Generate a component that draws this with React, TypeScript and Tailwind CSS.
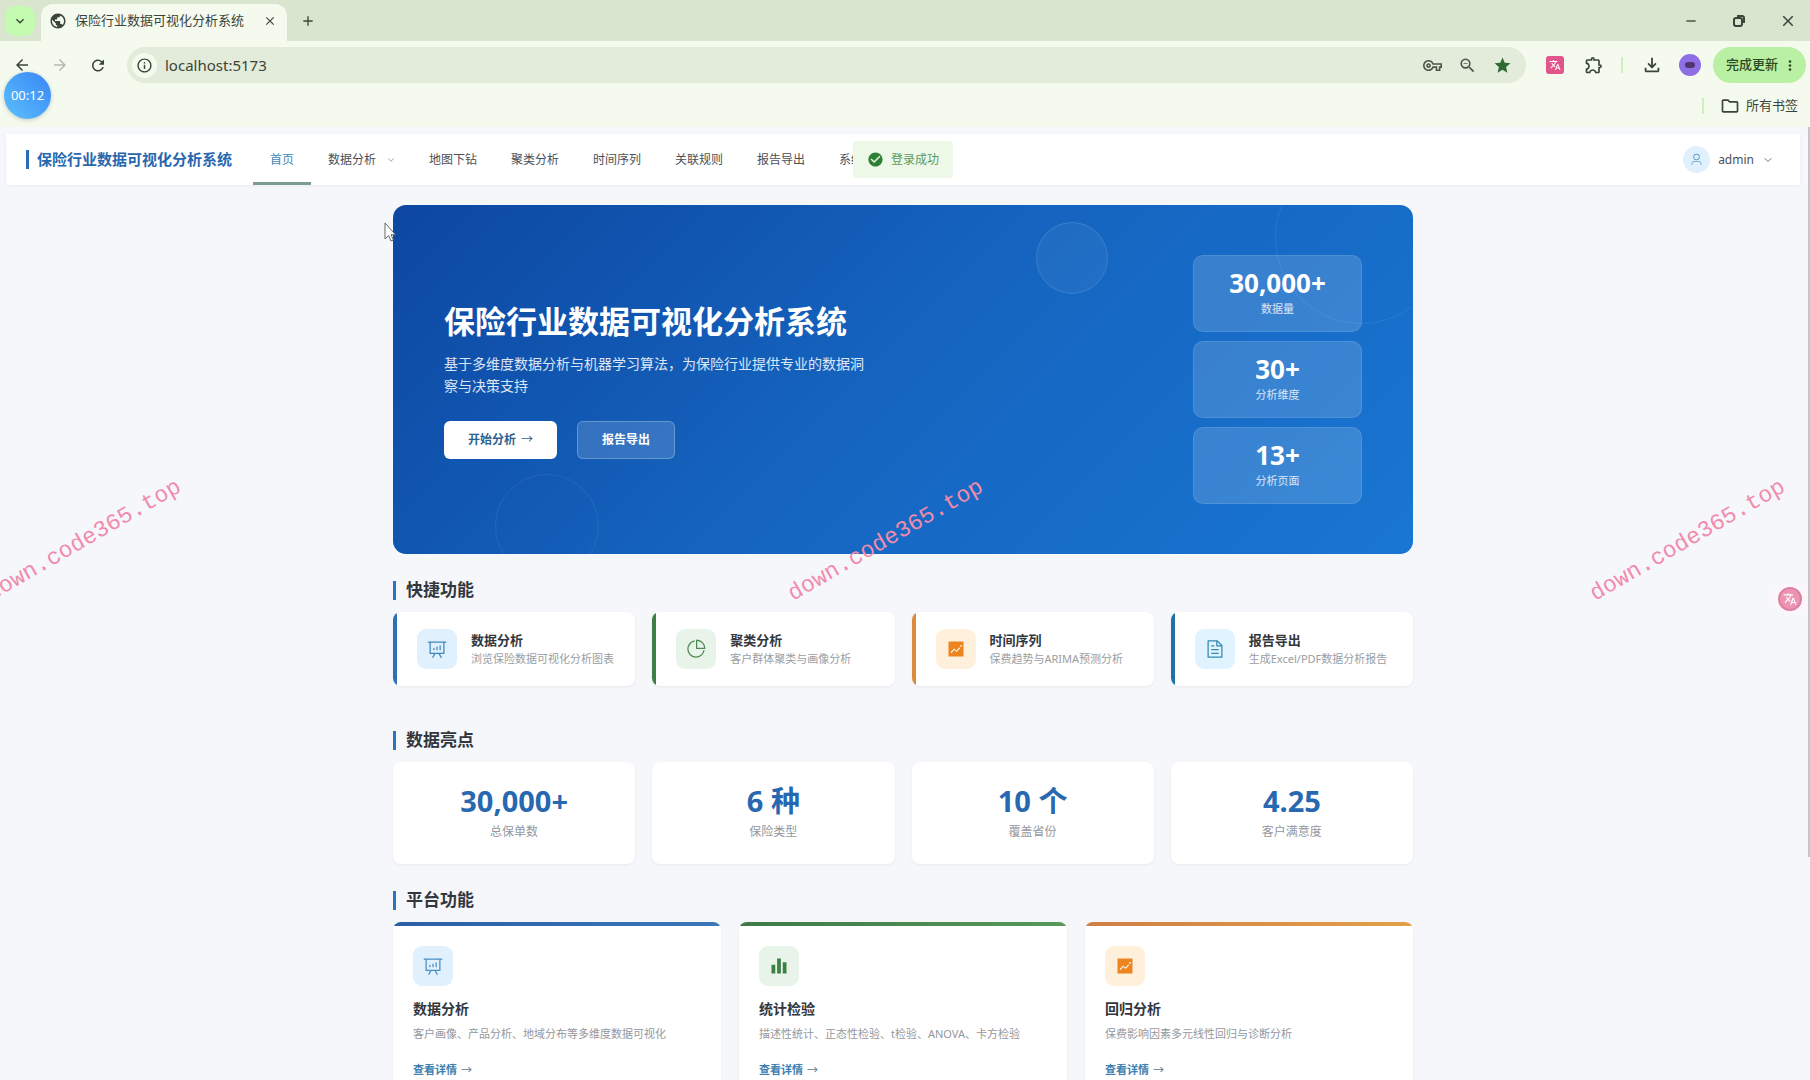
import type { ReactNode } from "react";
import {
  MdAdd,
  MdArrowBack,
  MdArrowForward,
  MdCheckCircle,
  MdClose,
  MdInfoOutline,
  MdKeyboardArrowDown,
  MdMoreVert,
  MdOutlineExtension,
  MdOutlineFileDownload,
  MdOutlineFolder,
  MdOutlineVpnKey,
  MdPublic,
  MdRefresh,
  MdRemove,
  MdStar,
  MdTranslate,
  MdZoomOut,
} from "react-icons/md";
import { ChevronDown } from "lucide-react";

const ICONS = {
  board:
    "m665.216 768 110.848 192h-73.856L591.36 768H433.024L322.176 960H248.32l110.848-192H160a32 32 0 0 1-32-32V192H64a32 32 0 0 1 0-64h896a32 32 0 1 1 0 64h-64v544a32 32 0 0 1-32 32zM832 192H192v512h640zM352 448a32 32 0 0 1 32 32v64a32 32 0 0 1-64 0v-64a32 32 0 0 1 32-32m160-64a32 32 0 0 1 32 32v128a32 32 0 0 1-64 0V416a32 32 0 0 1 32-32m160-64a32 32 0 0 1 32 32v192a32 32 0 1 1-64 0V352a32 32 0 0 1 32-32",
  pie: "M448 68.48v64.832A384.128 384.128 0 0 0 512 896a384.128 384.128 0 0 0 378.688-320h64.768A448.128 448.128 0 0 1 64 512 448.128 448.128 0 0 1 448 68.48M576 97.28V448h350.72A384.064 384.064 0 0 0 576 97.28M512 64V33.152A448 448 0 0 1 990.848 512H512z",
  trend:
    "M128 896V128h768v768zm291.712-327.296 128 102.4 180.16-201.792-47.744-42.624-139.84 156.608-128-102.4-180.16 201.792 47.744 42.624 139.84-156.608zM816 352a48 48 0 1 0-96 0 48 48 0 0 0 96 0",
  document:
    "M832 384H576V128H192v768h640zm-26.496-64L640 154.496V320zM160 64h480l256 256v608a32 32 0 0 1-32 32H160a32 32 0 0 1-32-32V96a32 32 0 0 1 32-32m160 448h384v64H320zm0-192h160v64H320zm0 384h384v64H320z",
  histogram: "M416 896V128h192v768zm-288 0V448h192v448zm576 0V320h192v576z",
  user: "M512 512a192 192 0 1 0 0-384 192 192 0 0 0 0 384m0 64a256 256 0 1 1 0-512 256 256 0 0 1 0 512m320 320v-96a96 96 0 0 0-96-96H288a96 96 0 0 0-96 96v96a32 32 0 1 1-64 0v-96a160 160 0 0 1 160-160h448a160 160 0 0 1 160 160v96a32 32 0 1 1-64 0",
};

type IconName = keyof typeof ICONS;

const Icon = ({ name, className }: { name: IconName; className?: string }) => (
  <svg viewBox="0 0 1024 1024" fill="currentColor" className={className} aria-hidden="true">
    <path d={ICONS[name]} />
  </svg>
);

const navItems = ["地图下钻", "聚类分析", "时间序列", "关联规则", "报告导出", "系统管理"];

const heroStats = [
  { value: "30,000+", label: "数据量" },
  { value: "30+", label: "分析维度" },
  { value: "13+", label: "分析页面" },
];

const shortcuts: { title: string; desc: string; icon: IconName; bar: string; tint: string }[] = [
  { title: "数据分析", desc: "浏览保险数据可视化分析图表", icon: "board", bar: "bg-[#2f6fb5]", tint: "bg-[#e1f0fd] text-[#3f86bd]" },
  { title: "聚类分析", desc: "客户群体聚类与画像分析", icon: "pie", bar: "bg-[#3d7f45]", tint: "bg-[#e8f4e9] text-[#4f8a55]" },
  { title: "时间序列", desc: "保费趋势与ARIMA预测分析", icon: "trend", bar: "bg-[#dc8a3c]", tint: "bg-[#fff0dc] text-[#ec8420]" },
  { title: "报告导出", desc: "生成Excel/PDF数据分析报告", icon: "document", bar: "bg-[#1c74a6]", tint: "bg-[#e0f3fe] text-[#2f8bb4]" },
];

const highlights = [
  { value: "30,000+", label: "总保单数" },
  { value: "6 种", label: "保险类型" },
  { value: "10 个", label: "覆盖省份" },
  { value: "4.25", label: "客户满意度" },
];

const features: { title: string; desc: string; icon: IconName; bar: string; tint: string }[] = [
  { title: "数据分析", desc: "客户画像、产品分析、地域分布等多维度数据可视化", icon: "board", bar: "from-[#2b60a4] to-[#3a78b8]", tint: "bg-[#e1f0fd] text-[#4a8fc4]" },
  { title: "统计检验", desc: "描述性统计、正态性检验、t检验、ANOVA、卡方检验", icon: "histogram", bar: "from-[#3f7a47] to-[#56995b]", tint: "bg-[#e8f4e9] text-[#3d8044]" },
  { title: "回归分析", desc: "保费影响因素多元线性回归与诊断分析", icon: "trend", bar: "from-[#d07f45] to-[#e2a148]", tint: "bg-[#fff0dc] text-[#ec8420]" },
];

const BrowserChrome = () => (
  <div className="shrink-0 bg-[#f5faef] text-[#3b4438]">
    <div className="flex h-[41px] items-center bg-[#d9e5cf] pl-[5px] pr-[13px]">
      <button aria-label="搜索标签页" className="flex h-[30px] w-[30px] items-center justify-center rounded-[10px] bg-[#c5fab1]">
        <MdKeyboardArrowDown className="h-4 w-4" />
      </button>
      <div className="ml-[6px] flex h-[37px] w-[246px] items-center self-end rounded-t-xl bg-[#f5faef] pb-1 pl-2 pr-[10px]">
        <MdPublic className="h-[18px] w-[18px] shrink-0" />
        <span className="ml-2 flex-1 whitespace-nowrap text-[13px]">保险行业数据可视化分析系统</span>
        <button aria-label="关闭标签页">
          <MdClose className="h-[14px] w-[14px]" />
        </button>
      </div>
      <button aria-label="新标签页" className="ml-[13px]">
        <MdAdd className="h-4 w-4" />
      </button>
      <div className="ml-auto flex items-center gap-8">
        <button aria-label="最小化">
          <MdRemove className="h-4 w-4" />
        </button>
        <button aria-label="还原">
          <svg viewBox="0 0 16 16" className="h-4 w-4" fill="none" stroke="currentColor" strokeWidth="2" aria-hidden="true">
            <rect x="3" y="5" width="8" height="8" rx="2" />
            <path d="M6 3h5a2 2 0 0 1 2 2v5" />
          </svg>
        </button>
        <button aria-label="关闭">
          <MdClose className="h-[18px] w-[18px]" />
        </button>
      </div>
    </div>

    <div className="flex h-12 items-center pl-[13px] pr-1">
      <div className="flex w-[114px] items-center gap-5">
        <button aria-label="后退">
          <MdArrowBack className="h-[18px] w-[18px]" />
        </button>
        <button aria-label="前进" className="text-[#b3bbae]">
          <MdArrowForward className="h-[18px] w-[18px]" />
        </button>
        <button aria-label="重新加载">
          <MdRefresh className="h-[19px] w-[18px]" />
        </button>
      </div>
      <div className="flex h-9 flex-1 items-center rounded-full bg-[#e3ebda] pl-[5px] pr-[14px]">
        <span className="flex h-[25px] w-[25px] items-center justify-center rounded-full bg-[#f5faef]">
          <MdInfoOutline className="h-[17px] w-[17px]" />
        </span>
        <input
          aria-label="地址"
          defaultValue="localhost:5173"
          className="ml-2 min-w-0 flex-1 bg-transparent text-[15px] outline-none"
        />
        <div className="flex items-center gap-4 text-[#4d564a]">
          <MdOutlineVpnKey className="h-[19px] w-[19px]" />
          <MdZoomOut className="h-[19px] w-[19px]" />
          <MdStar className="h-[19px] w-[19px] text-[#2f6b33]" />
        </div>
      </div>
      <div className="ml-5 flex items-center">
        <span className="flex h-[18px] w-[18px] items-center justify-center rounded-[3px] bg-[#e2558b] text-white">
          <MdTranslate className="h-3 w-3" />
        </span>
        <MdOutlineExtension className="ml-5 h-5 w-5" />
        <span className="ml-[17px] h-4 w-[2px] bg-[#cdf0bd]" />
        <MdOutlineFileDownload className="ml-[18px] h-[22px] w-[22px]" />
        <span className="ml-4 flex h-[22px] w-[22px] items-center justify-center rounded-full bg-[#8f6fe6]">
          <span className="h-[6px] w-[10px] rounded-full bg-[#51356f]" />
        </span>
        <button className="ml-3 flex h-9 items-center rounded-full bg-[#b9f0a3] pl-[13px] pr-2 text-[#2b4a24]">
          <span className="text-[13px] font-medium">完成更新</span>
          <MdMoreVert className="ml-1 h-[19px] w-4" />
        </button>
      </div>
    </div>

    <div className="flex h-[38px] items-center justify-end pb-1 pr-3">
      <span className="h-4 w-[2px] bg-[#cdf0bd]" />
      <button className="ml-4 flex items-center gap-[6px] text-[13px]">
        <MdOutlineFolder className="h-5 w-5" />
        所有书签
      </button>
    </div>
  </div>
);

const TopNav = () => (
  <header className="relative flex h-[51px] items-center bg-white pl-5 pr-[26px] text-[12px] text-[#4b4f56] shadow-[0_1px_4px_rgba(0,0,0,0.06)]">
    <div className="flex w-[227px] items-center gap-2">
      <span className="h-[19px] w-[3px] bg-[#2a6cb8]" />
      <span className="whitespace-nowrap text-[15px] font-bold text-[#2767ae]">保险行业数据可视化分析系统</span>
    </div>
    <nav className="flex h-full items-stretch whitespace-nowrap">
      <a href="#home" className="flex items-center border-b-3 border-[#7d9d93] px-[17px] pt-[3px] text-[#4186b5]">
        首页
      </a>
      <a href="#analysis" className="flex items-center gap-[10px] pl-[17px] pr-4">
        数据分析
        <ChevronDown className="h-[10px] w-[10px] text-[#8b9097]" />
      </a>
      {navItems.map((item) => (
        <a key={item} href={`#${item}`} className="flex items-center px-[17px]">
          {item}
        </a>
      ))}
    </nav>
    <button className="ml-auto flex items-center gap-2">
      <span className="flex h-[27px] w-[27px] items-center justify-center rounded-full bg-[#e1f0fd] text-[#5aa0c8]">
        <Icon name="user" className="h-[13px] w-[13px]" />
      </span>
      <span>admin</span>
      <ChevronDown className="h-3 w-3 text-[#70757c]" />
    </button>

    {/* login toast */}
    <div
      role="status"
      className="absolute left-1/2 top-[7px] flex h-[37px] -translate-x-1/2 items-center gap-[7px] whitespace-nowrap rounded bg-[#edf8e8] px-[14px] text-[#5c9a5c]"
    >
      <MdCheckCircle className="h-[17px] w-[17px] text-[#2c8137]" />
      登录成功
    </div>
  </header>
);

const SectionTitle = ({ children }: { children: ReactNode }) => (
  <h2 className="mb-[10px] flex h-6 items-center gap-[10px] text-[17px] font-bold text-[#33373d]">
    <span className="h-[19px] w-[3px] bg-[#2f73bd]" />
    {children}
  </h2>
);

const Hero = () => (
  <section className="relative flex min-h-[349px] items-center justify-between overflow-hidden rounded-[13px] bg-linear-135 from-[#0d47a1] via-[#1565c0] to-[#1976d2] px-[51px] py-[50px] text-white">
    <span className="absolute left-[643px] top-[17px] h-[72px] w-[72px] rounded-full border border-white/10 bg-white/5" />
    <span className="absolute -bottom-6 left-[102px] h-[104px] w-[104px] rounded-full border border-white/7" />
    <span className="absolute -right-[34px] -top-[53px] h-[172px] w-[172px] rounded-full border border-white/7" />

    <div className="relative max-w-[428px]">
      <h1 className="mb-3 whitespace-nowrap text-[31px] font-bold leading-10">保险行业数据可视化分析系统</h1>
      <p className="mb-6 text-[14px] leading-[22px] text-white/85">
        基于多维度数据分析与机器学习算法，为保险行业提供专业的数据洞察与决策支持
      </p>
      <div className="flex gap-5 text-[12px] font-bold">
        <button className="flex h-[38px] items-center gap-[5px] rounded-md bg-white px-6 text-[#2d6290]">
          开始分析 <span className="font-normal">→</span>
        </button>
        <button className="h-[38px] rounded-md border border-white/25 bg-white/15 px-6">报告导出</button>
      </div>
    </div>

    <div className="relative flex w-[169px] flex-col gap-[9px]">
      {heroStats.map((stat) => (
        <div key={stat.label} className="flex h-[77px] flex-col items-center justify-center rounded-[10px] border border-white/10 bg-white/15 pb-[2px] text-center">
          <div className="text-[26px] font-bold leading-8">{stat.value}</div>
          <div className="text-[11px] leading-5 text-white/80">{stat.label}</div>
        </div>
      ))}
    </div>
  </section>
);

const Shortcuts = () => (
  <section className="mt-6">
    <SectionTitle>快捷功能</SectionTitle>
    <div className="grid grid-cols-4 gap-[17px]">
      {shortcuts.map((s) => (
        <a
          key={s.title}
          href={`#${s.icon}`}
          className="flex h-[74px] items-center overflow-hidden rounded-lg bg-white shadow-[0_1px_3px_rgba(0,0,0,0.06)]"
        >
          <span className={`h-full w-1 shrink-0 ${s.bar}`} />
          <span className={`ml-5 flex h-10 w-10 shrink-0 items-center justify-center rounded-[9px] ${s.tint}`}>
            <Icon name={s.icon} className="h-5 w-5" />
          </span>
          <span className="ml-[14px] min-w-0">
            <span className="block text-[13px] font-bold leading-5 text-[#33373d]">{s.title}</span>
            <span className="block whitespace-nowrap text-[11px] leading-[18px] text-[#9a9da3]">{s.desc}</span>
          </span>
        </a>
      ))}
    </div>
  </section>
);

const Highlights = () => (
  <section className="mt-[42px]">
    <SectionTitle>数据亮点</SectionTitle>
    <div className="grid grid-cols-4 gap-[17px]">
      {highlights.map((h) => (
        <div key={h.label} className="flex h-[102px] flex-col items-center justify-center rounded-lg bg-white pb-[2px] shadow-[0_1px_3px_rgba(0,0,0,0.06)]">
          <div className="text-[29px] font-bold leading-10 text-[#2768b0]">{h.value}</div>
          <div className="text-[12px] leading-[22px] text-[#94979d]">{h.label}</div>
        </div>
      ))}
    </div>
  </section>
);

const Features = () => (
  <section className="mt-6">
    <SectionTitle>平台功能</SectionTitle>
    <div className="grid grid-cols-3 gap-[18px]">
      {features.map((f) => (
        <article key={f.title} className="overflow-hidden rounded-lg bg-white shadow-[0_1px_3px_rgba(0,0,0,0.06)]">
          <div className={`h-1 bg-linear-to-r ${f.bar}`} />
          <div className="px-5 pb-6 pt-5">
            <span className={`flex h-10 w-10 items-center justify-center rounded-[9px] ${f.tint}`}>
              <Icon name={f.icon} className="h-5 w-5" />
            </span>
            <h3 className="mt-3 text-[14px] font-bold leading-[22px] text-[#33373d]">{f.title}</h3>
            <p className="mt-1 text-[11px] leading-5 text-[#94979d]">{f.desc}</p>
            <a href={`#${f.title}`} className="mt-4 flex gap-1 text-[11px] font-bold leading-5 text-[#3d7fb0]">
              查看详情 <span className="font-normal text-[#5f7382]">→</span>
            </a>
          </div>
        </article>
      ))}
    </div>
  </section>
);

// repeated diagonal site mark
const Watermark = ({ className }: { className: string }) => (
  <span
    className={`pointer-events-none absolute top-[541px] -translate-x-1/2 -translate-y-1/2 -rotate-30 whitespace-nowrap font-['Liberation_Mono',monospace] text-[23px] leading-none text-[#f28bab] ${className}`}
  >
    down.code365.top
  </span>
);

export default function App() {
  return (
    <div className="relative flex h-screen flex-col overflow-hidden bg-[#f5f7fb] font-['Noto_Sans','Noto_Sans_CJK_SC',sans-serif]">
      <BrowserChrome />
      <div className="ml-[6px] mr-[10px] mt-[7px] min-h-0 flex-1">
        <TopNav />
        <main className="mx-auto max-w-[1020px] pt-5">
          <Hero />
          <Shortcuts />
          <Highlights />
          <Features />
        </main>
      </div>

      <span className="absolute right-0 top-[127px] h-[730px] w-[2px] bg-[#c3c6cc]" />

      {/* recording timer */}
      <div className="absolute left-[4px] top-[72px] flex h-[47px] w-[47px] items-center justify-center rounded-full bg-linear-to-tr from-[#5cc0fa] to-[#3a85f7] text-[13px] text-white shadow-[0_1px_4px_rgba(0,0,0,0.2)]">
        00:12
      </div>

      {/* translate extension handle */}
      <button
        aria-label="翻译"
        className="absolute right-[2px] top-[584px] flex h-[30px] w-[36px] items-center justify-center rounded-l-full bg-[#fbf6fa]"
      >
        <span className="flex h-6 w-6 items-center justify-center rounded-full border-2 border-[#dc7fa2] bg-[#ec94b2] text-white">
          <MdTranslate className="h-[14px] w-[14px]" />
        </span>
      </button>

      {/* pointer */}
      <svg viewBox="0 0 12 20" className="absolute left-[384px] top-[222px] h-5 w-3" aria-hidden="true">
        <path d="M1 1v16l3.600-3.500 2.400 5.500 2.400-1-2.400-5.300H11.500z" fill="#fff" stroke="#666" strokeWidth="1" />
      </svg>

      <Watermark className="left-[84px]" />
      <Watermark className="left-[886px]" />
      <Watermark className="left-[1688px]" />
    </div>
  );
}
